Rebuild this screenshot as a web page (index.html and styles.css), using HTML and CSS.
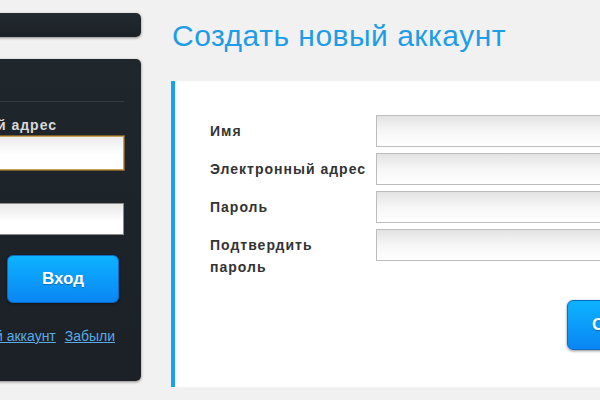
FILE: index.html
```html
<!DOCTYPE html>
<html lang="ru">
<head>
<meta charset="utf-8">
<title>Создать новый аккаунт</title>
<link rel="stylesheet" href="styles.css">
</head>
<body>
<div class="page">
  <aside class="sidebar">
    <div class="topbar"></div>
    <div class="panel">
      <div class="panel-head">Вход в систему</div>
      <div class="field-label">Электронный адрес</div>
      <input class="side-input focused" type="text">
      <div class="field-label second">Пароль</div>
      <input class="side-input" type="password">
      <div class="login-row">
        <button class="btn btn-login" type="button">Вход</button>
      </div>
      <div class="links">
        <a href="#">Новый аккаунт</a>
        <a href="#">Забыли</a>
      </div>
    </div>
  </aside>
  <main class="main">
    <h1 class="title">Создать новый аккаунт</h1>
    <section class="card">
      <div class="form">
        <label class="label">Имя</label>
        <input class="input" type="text">
        <label class="label">Электронный адрес</label>
        <input class="input" type="text">
        <label class="label">Пароль</label>
        <input class="input" type="password">
        <label class="label">Подтвердить<br>пароль</label>
        <input class="input" type="password">
      </div>
      <div class="actions">
        <button class="btn btn-create" type="button">Создать</button>
      </div>
    </section>
  </main>
</div>
</body>
</html>
```

FILE: styles.css
```css
* { box-sizing: border-box; }
html, body { margin: 0; padding: 0; }
body {
  background: #f2f1f2;
  font-family: "Liberation Sans", Arial, sans-serif;
  overflow: hidden;
  width: 600px;
  height: 400px;
}
.page {
  display: flex;
  align-items: flex-start;
  margin-left: -119px;
}
.sidebar {
  width: 260px;
  flex: 0 0 260px;
  padding-top: 13px;
}
.topbar {
  height: 24px;
  background: linear-gradient(#232a30, #1b2126);
  border-radius: 5px;
  box-shadow: 0 1px 3px rgba(0,0,0,0.45);
}
.panel {
  margin-top: 22px;
  height: 322px;
  background: linear-gradient(#1f262c, #1b2126);
  border-radius: 5px;
  box-shadow: 0 1px 3px rgba(0,0,0,0.45);
  padding: 0 17px 0 20px;
}
.panel-head {
  height: 43px;
  border-bottom: 1px solid #313a42;
  color: transparent;
  font-size: 1px;
}
.field-label {
  margin-top: 15px;
  line-height: 16px;
  font-size: 14px;
  font-weight: bold;
  letter-spacing: 1px;
  color: #d9d9d9;
  text-align: right;
  padding-right: 67px;
  white-space: nowrap;
}
.field-label.second {
  margin-top: 8px;
  color: transparent;
}
.side-input {
  display: block;
  width: 100%;
  margin: 3px 0 0;
  height: 33px;
  border: 1px solid #8c8c8c;
  background: linear-gradient(#e8e8e8, #ffffff 60%);
  outline: none;
}
.side-input.focused {
  height: 34px;
  border: 1px solid #c8a258;
  box-shadow: 0 0 0 1px #7a5f2a;
  background: linear-gradient(#ececec, #ffffff 55%);
}
.field-label.second + .side-input {
  margin-top: 9px;
  height: 32px;
}
.login-row {
  margin-top: 20px;
  display: flex;
  justify-content: flex-end;
  padding-right: 5px;
}
.btn {
  border: 1px solid #0a6ac4;
  border-radius: 6px;
  background: linear-gradient(#0db3ff, #0a86f4);
  color: #ffffff;
  font-family: "Liberation Sans", Arial, sans-serif;
  font-weight: bold;
  font-size: 17px;
  text-shadow: 0 1px 1px rgba(0,0,0,0.3);
  box-shadow: 0 1px 3px rgba(0,0,0,0.45);
  cursor: pointer;
}
.btn-login {
  width: 112px;
  height: 48px;
}
.links {
  margin-top: 25px;
  line-height: 16px;
  font-size: 14px;
  text-align: right;
  padding-right: 9px;
  white-space: nowrap;
}
.links a {
  color: #5aaae6;
  text-decoration: underline;
  margin-left: 5px;
}
.main {
  margin-left: 30px;
  width: 500px;
  flex: 0 0 500px;
}
.title {
  margin: 19px 0 0 1px;
  font-size: 30px;
  line-height: 34px;
  letter-spacing: 0.5px;
  font-weight: normal;
  color: #1d9de6;
}
.card {
  margin-top: 28px;
  height: 306px;
  background: #ffffff;
  border-left: 4px solid #17a2ec;
  padding: 34px 0 0 35px;
}
.form {
  display: grid;
  grid-template-columns: 166px 260px;
  row-gap: 6px;
  align-items: start;
}
.label {
  padding-top: 5px;
  line-height: 22px;
  font-size: 14px;
  font-weight: bold;
  letter-spacing: 1px;
  color: #333333;
}
.input {
  height: 32px;
  width: 100%;
  border: 1px solid #bcbcbc;
  background: linear-gradient(#e3e3e3, #f6f6f6 50%, #ffffff);
  outline: none;
  margin: 0;
}
.actions {
  margin-top: 22px;
  padding-left: 357px;
}
.btn-create {
  width: 120px;
  height: 50px;
}
```
